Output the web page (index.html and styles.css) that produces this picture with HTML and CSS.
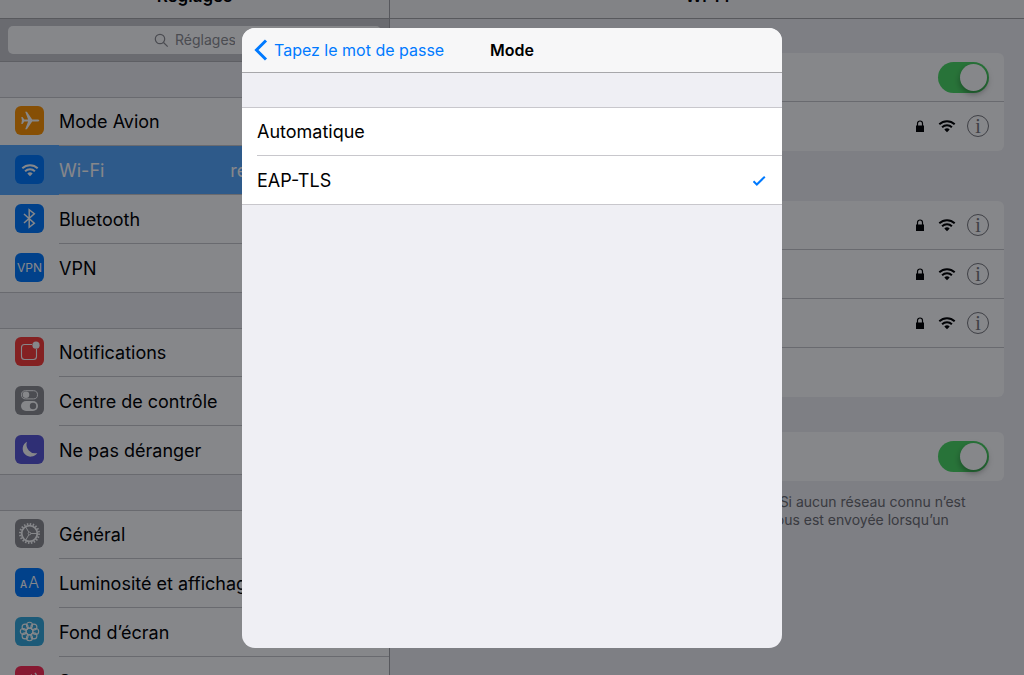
FILE: index.html
```html
<!DOCTYPE html>
<html lang="fr">
<head>
    <meta charset="utf-8">
    <meta name="viewport" content="width=device-width, initial-scale=1.0">
    <title>Réglages</title>
    <link rel="stylesheet" href="styles.css">
</head>
<body>
<svg class="defs" aria-hidden="true">
    <symbol id="wifi" viewBox="0 0 18 14">
        <g fill="none" stroke="currentColor" stroke-width="2">
            <path d="M1.3 5.2a11.2 11.2 0 0 1 15.4 0"/>
            <path d="M4.1 8.2a7.2 7.2 0 0 1 9.8 0"/>
        </g>
        <path d="M6.3 10.5a4 4 0 0 1 5.4 0L9 13.2z" fill="currentColor"/>
    </symbol>
    <symbol id="lock" viewBox="0 0 10 12">
        <path d="M2.5 6V3.5a2.5 2.5 0 0 1 5 0V6" fill="none" stroke="currentColor" stroke-width="1.2"/>
        <path d="M1 5.5h8V12H1z" fill="currentColor"/>
    </symbol>
</svg>

<div class="app">
    <div class="sidebar">
        <div class="navbar"><h1>Réglages</h1></div>
        <div class="search-bar">
            <label class="search">
                <svg width="15" height="15" viewBox="0 0 15 15" fill="none" stroke="currentColor" stroke-width="1.2"><circle cx="6" cy="6" r="4.7"/><path d="M9.5 9.5l4.2 4.2"/></svg>
                <input type="text" placeholder="Réglages" aria-label="Réglages">
            </label>
        </div>

        <div class="group">
            <a class="row" href="#">
                <span class="icon orange"><svg viewBox="0 0 29 29"><path d="M24.3 14.5c0 .7-.9 1.1-2 1.1h-5.1l-5.3 7.6h-1.7l2.9-7.6H9.3l-1.8 2.5H6.3l.6-3.6-.6-3.6h1.2l1.8 2.5h3.8l-2.9-7.6h1.7l5.3 7.6h5.1c1.1 0 2 .4 2 1.1z" fill="#fff"/></svg></span>
                <span class="label">Mode Avion</span>
            </a>
            <a class="row selected" href="#">
                <span class="icon blue"><svg class="wifi" viewBox="0 0 18 14"><use href="#wifi"/></svg></span>
                <span class="label">Wi-Fi<span class="value">reseau-etudiants</span></span>
            </a>
            <a class="row" href="#">
                <span class="icon blue"><svg viewBox="0 0 29 29"><path d="M9 10l10.3 9.3-5.1 4V5.7l5.1 4L9 19" fill="none" stroke="#fff" stroke-width="1.5"/></svg></span>
                <span class="label">Bluetooth</span>
            </a>
            <a class="row" href="#">
                <span class="icon blue vpn">VPN</span>
                <span class="label">VPN</span>
            </a>
        </div>

        <div class="group">
            <a class="row" href="#">
                <span class="icon red"><svg viewBox="0 0 29 29"><path d="M17 7.5H9.5a3 3 0 0 0-3 3v9a3 3 0 0 0 3 3h9a3 3 0 0 0 3-3V12" fill="none" stroke="#fff" stroke-width="1.1"/><circle cx="21" cy="8.2" r="3.6" fill="#fff"/></svg></span>
                <span class="label">Notifications</span>
            </a>
            <a class="row" href="#">
                <span class="icon gray"><svg viewBox="0 0 29 29"><rect x="6.5" y="4.7" width="16" height="8.2" rx="4.1" fill="none" stroke="#fff"/><circle cx="11" cy="8.8" r="3.3" fill="#fff"/><rect x="6" y="15" width="17" height="10" rx="5" fill="#fff"/><circle cx="18" cy="20" r="3.2" fill="#8e8e93"/></svg></span>
                <span class="label">Centre de contrôle</span>
            </a>
            <a class="row" href="#">
                <span class="icon purple"><svg viewBox="0 0 29 29"><path d="M12 6.7a7.9 7.9 0 1 0 10.3 11.2A8.6 8.6 0 0 1 12 6.7z" fill="#fff"/></svg></span>
                <span class="label">Ne pas déranger</span>
            </a>
        </div>

        <div class="group">
            <a class="row" href="#">
                <span class="icon gray"><svg viewBox="0 0 29 29" fill="none" stroke="#fff"><circle cx="14.5" cy="14.5" r="9.5" stroke-width="2" stroke-dasharray="1.5 1.484"/><circle cx="14.5" cy="14.5" r="7.8" stroke-width="1.8"/><circle cx="14.5" cy="14.5" r="1.3"/><path d="M15.7 14.5h6.5M13.9 13.4l-3.4-5.8M13.9 15.6l-3.4 5.8"/></svg></span>
                <span class="label">Général</span>
            </a>
            <a class="row" href="#">
                <span class="icon blue aa"><small>A</small>A</span>
                <span class="label">Luminosité et affichage</span>
            </a>
            <a class="row" href="#">
                <span class="icon cyan"><svg viewBox="0 0 29 29" fill="none" stroke="#fff" stroke-width="1.1"><circle cx="14.5" cy="8.3" r="3"/><circle cx="18.9" cy="10.1" r="3"/><circle cx="20.7" cy="14.5" r="3"/><circle cx="18.9" cy="18.9" r="3"/><circle cx="14.5" cy="20.7" r="3"/><circle cx="10.1" cy="18.9" r="3"/><circle cx="8.3" cy="14.5" r="3"/><circle cx="10.1" cy="10.1" r="3"/><circle cx="14.5" cy="14.5" r="3.4"/></svg></span>
                <span class="label">Fond d’écran</span>
            </a>
            <a class="row" href="#">
                <span class="icon pink"><svg viewBox="0 0 29 29"><path d="M6 12h4l7-4v13l-7-4H6z" fill="#fff"/><path d="M20 7q5 6 0 14" fill="none" stroke="#fff" stroke-width="1.5"/></svg></span>
                <span class="label">Sons</span>
            </a>
        </div>
    </div>

    <div class="detail">
        <div class="navbar"><h1>Wi-Fi</h1></div>
        <div class="content">
            <div class="card">
                <label class="cell"><span>Wi-Fi</span><input class="switch" type="checkbox" checked></label>
                <div class="cell">
                    <span>reseau-etudiants</span>
                    <svg class="lock"><use href="#lock"/></svg>
                    <svg class="wifi"><use href="#wifi"/></svg>
                    <button class="info" aria-label="Informations">i</button>
                </div>
            </div>
            <h2>Choisissez un réseau</h2>
            <div class="card">
                <div class="cell">
                    <span>reseau-invites</span>
                    <svg class="lock"><use href="#lock"/></svg>
                    <svg class="wifi"><use href="#wifi"/></svg>
                    <button class="info" aria-label="Informations">i</button>
                </div>
                <div class="cell">
                    <span>reseau-mobile</span>
                    <svg class="lock"><use href="#lock"/></svg>
                    <svg class="wifi"><use href="#wifi"/></svg>
                    <button class="info" aria-label="Informations">i</button>
                </div>
                <div class="cell">
                    <span>reseau-salles</span>
                    <svg class="lock"><use href="#lock"/></svg>
                    <svg class="wifi"><use href="#wifi"/></svg>
                    <button class="info" aria-label="Informations">i</button>
                </div>
                <div class="cell"><span>Autre…</span></div>
            </div>
            <div class="card last">
                <label class="cell"><span>Confirmer l’accès</span><input class="switch" type="checkbox" checked></label>
            </div>
            <p class="note">La connexion à vos réseaux connus est automatique. Si aucun réseau connu n’est disponible à proximité de l’appareil, une notification vous est envoyée lorsqu’un réseau est détecté.</p>
        </div>
    </div>
</div>

<div class="overlay">
    <div class="modal" role="dialog" aria-label="Mode">
        <div class="modal-nav">
            <button class="back"><svg width="14" height="22" viewBox="0 0 14 22" fill="none" stroke="currentColor" stroke-width="3"><path d="M12 1.5L2.5 11l9.5 9.5"/></svg>Tapez le mot de passe</button>
            <h2>Mode</h2>
        </div>
        <div class="options">
            <label class="option"><span>Automatique</span><input type="radio" name="mode"></label>
            <label class="option">
                <span>EAP-TLS</span><input type="radio" name="mode" checked>
                <svg class="check" width="15" height="12" viewBox="0 0 15 12" fill="none" stroke="currentColor" stroke-width="2"><path d="M1.5 6.3l3.3 3.2 8-7.8"/></svg>
            </label>
        </div>
    </div>
</div>
</body>
</html>
```
FILE: styles.css
```css
* {
    box-sizing: border-box;
}

body {
    margin: 0;
    height: 100vh;
    overflow: hidden;
    font-family: Inter, "Liberation Sans", sans-serif;
    font-size: 18px;
    color: #000;
    background: #efeff4;
}

h1, h2, p {
    margin: 0;
}

input, button {
    font: inherit;
    margin: 0;
}

.defs {
    position: absolute;
    width: 0;
    height: 0;
}

.app {
    display: flex;
    height: 100vh;
    overflow: hidden;
}

.sidebar {
    width: calc(38% + 1px);
    flex: none;
    background: #efeff4;
    border-right: 1px solid #a5a5aa;
}

.detail {
    flex: 1;
}

/* the bar is scrolled partly out of view */
.navbar {
    display: flow-root;
    height: 19px;
    background: #f7f7f8;
    border-bottom: 1px solid #a7a7aa;
}

.navbar h1 {
    margin-top: -14px;
    font-size: 17px;
    line-height: 20px;
    font-weight: 600;
    text-align: center;
}

.search-bar {
    height: 43px;
    padding: 7px 8px;
    background: #c9c9ce;
    border-bottom: 1px solid #b2b2b6;
}

.search {
    display: flex;
    align-items: center;
    justify-content: center;
    gap: 6px;
    height: 28px;
    border-radius: 5px;
    background: #fff;
    color: #8e8e93;
}

.search input {
    width: 60px;
    padding: 0;
    border: none;
    background: none;
    font-size: 14px;
    line-height: 18px;
}

.search input::placeholder {
    color: #8e8e93;
}

.group {
    margin-top: 35px;
    background: #fff;
    border-bottom: 1px solid #c8c7cc;
}

.row {
    display: flex;
    align-items: center;
    gap: 15px;
    height: 49px;
    padding-left: 15px;
    color: #000;
    text-decoration: none;
}

.row:first-child {
    border-top: 1px solid #c8c7cc;
}

.row:last-child {
    height: 48px;
}

.row .label {
    display: flex;
    justify-content: space-between;
    flex: 1;
    height: 100%;
    padding-right: 15px;
    line-height: 49px;
    border-bottom: 1px solid #c8c7cc;
}

.row:first-child .label {
    line-height: 47px;
}

.row:last-child .label {
    border-bottom: none;
}

/* covers the separator above it */
.row.selected {
    background: #57a9ff;
    box-shadow: 0 -1px #57a9ff;
    color: #fff;
}

.icon {
    display: flex;
    align-items: center;
    justify-content: center;
    flex: none;
    width: 29px;
    height: 29px;
    margin-bottom: 2px;
    border-radius: 6px;
    color: #fff;
}

.row:first-child .icon {
    margin-bottom: 3px;
}

.icon svg {
    width: 29px;
    height: 29px;
}

.icon .wifi {
    width: 18px;
    height: 14px;
}

.vpn {
    font-size: 12px;
}

.aa {
    align-items: baseline;
    gap: 1px;
    font-size: 16px;
    line-height: 29px;
    font-weight: 300;
}

.aa small {
    font-size: 10px;
    font-weight: 500;
}

.orange { background: #ff9500; }
.blue { background: #007aff; }
.red { background: #fc3d39; }
.gray { background: #8e8e93; }
.purple { background: #5856d6; }
.cyan { background: #35aadc; }
.pink { background: #ff2d55; }

.content {
    padding: 34px 20px;
}

.card {
    overflow: hidden;
    border-radius: 6px;
    background: #fff;
}

.cell {
    display: flex;
    align-items: center;
    height: 49px;
    padding: 0 15px;
    border-bottom: 1px solid #c8c7cc;
}

.cell:last-child {
    border-bottom-color: transparent;
}

.cell span {
    flex: 1;
}

.cell .lock {
    width: 10px;
    height: 12px;
    margin-right: 13px;
}

.cell .wifi {
    width: 18px;
    height: 14px;
    margin-right: 11px;
}

.info {
    width: 22px;
    height: 22px;
    padding: 0;
    border: 1px solid #77777c;
    border-radius: 50%;
    background: none;
    color: #77777c;
    font-family: "Liberation Serif", serif;
    font-size: 20px;
    line-height: 20px;
}

.switch {
    appearance: none;
    width: 51px;
    height: 31px;
    border-radius: 16px;
    background: #4cd964;
}

.switch::before {
    content: "";
    display: block;
    width: 27px;
    height: 27px;
    margin: 2px 2px 2px 22px;
    border-radius: 50%;
    background: #fff;
    box-shadow: 0 3px 6px rgba(0, 0, 0, .35);
}

.content h2 {
    height: 50px;
    padding: 22px 15px 0;
    font-size: 14px;
    font-weight: 400;
    color: #6d6d72;
}

.last {
    margin-top: 35px;
}

.note {
    padding: 12px 15px;
    font-size: 14px;
    line-height: 18px;
    color: #6d6d72;
}

.overlay {
    position: absolute;
    inset: 0;
    display: flex;
    align-items: center;
    justify-content: center;
    background: rgba(2, 4, 10, .48);
}

.modal {
    width: 540px;
    max-width: 100%;
    height: 620px;
    overflow: hidden;
    border-radius: 13px;
    background: #efeff4;
}

.modal-nav {
    display: grid;
    grid-template-columns: 1fr auto 1fr;
    align-items: center;
    height: 45px;
    padding: 0 12px;
    background: #f7f7f8;
    border-bottom: 1px solid #a7a7aa;
}

.modal-nav h2 {
    font-size: 16px;
    line-height: 22px;
    font-weight: 600;
}

.back {
    display: flex;
    align-items: center;
    gap: 6px;
    padding: 0;
    border: none;
    background: none;
    color: #007aff;
    font-size: 16px;
    line-height: 22px;
    white-space: nowrap;
}

.options {
    margin-top: 34px;
    border-top: 1px solid #c8c7cc;
    border-bottom: 1px solid #c8c7cc;
    background: #fff;
}

.option {
    display: flex;
    align-items: center;
    height: 47px;
    margin-left: 15px;
    padding-right: 15px;
}

.option + .option {
    border-top: 1px solid #c8c7cc;
    height: 49px;
    padding-top: 2px;
}

.option span {
    flex: 1;
}

.option input {
    appearance: none;
}

.check {
    color: #007aff;
}
```
